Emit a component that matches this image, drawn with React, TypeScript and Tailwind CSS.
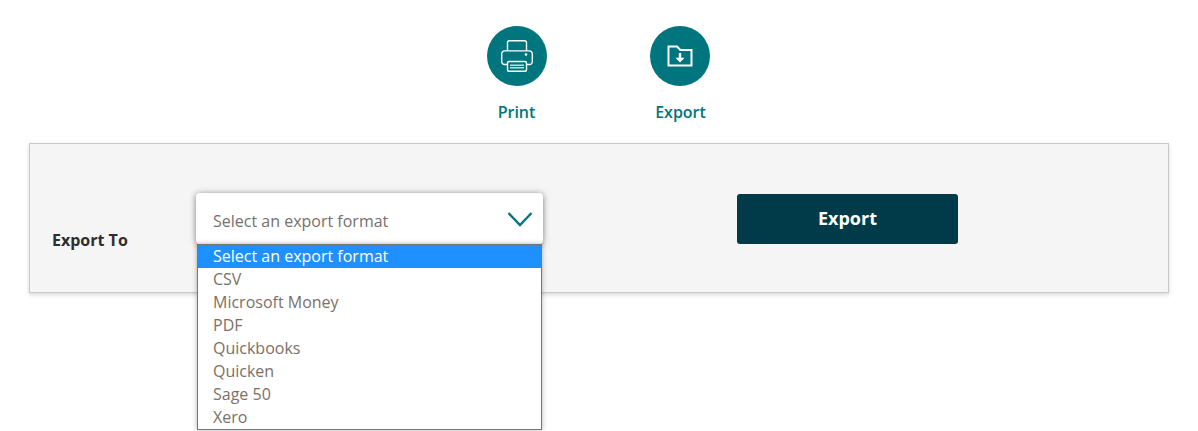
const formats = ["CSV", "Microsoft Money", "PDF", "Quickbooks", "Quicken", "Sage 50", "Xero"];

function PrinterIcon() {
  return (
    <svg width="32" height="32" viewBox="0 0 32 32" fill="none" stroke="#fff" strokeWidth="1.4">
      <path d="M6.500 11V2.500a1.800 1.800 0 0 1 1.800-1.800h15.400a1.800 1.800 0 0 1 1.800 1.800V11" />
      <path d="M6.500 24.500H3.500a2.800 2.800 0 0 1-2.800-2.800v-8a2.800 2.800 0 0 1 2.800-2.800h25a2.800 2.800 0 0 1 2.800 2.800v8a2.800 2.800 0 0 1-2.800 2.800h-3" />
      <rect x="6.500" y="21.500" width="19" height="9.800" rx="1.500" />
      <rect x="9" y="24.500" width="14" height="4" fill="#bfe0e2" stroke="none" />
      <path d="M9 26.500h14" strokeWidth="1" stroke="#00757d" />
      <circle cx="25" cy="14.500" r="1.300" fill="#fff" stroke="none" />
    </svg>
  );
}

function FolderIcon() {
  return (
    <svg width="26" height="22" viewBox="0 0 26 22" fill="none">
      <path d="M1.500 1.500h8.500l3.300 3.500h11.200v15.500H1.500z" stroke="#fff" strokeWidth="2" />
      <path d="M11.800 8h2.400v4.800h3.300L13 17.500l-4.500-4.700h3.300z" fill="#fff" />
    </svg>
  );
}

export default function App() {
  return (
    <div className="h-[431px] overflow-hidden bg-white font-['Open_Sans',sans-serif]">
      <div className="flex justify-center pt-[26px] pr-[2px]">
        <div className="flex w-[163px] flex-col items-center">
          <div className="flex h-[60px] w-[60px] items-center justify-center rounded-full bg-[#00757d]">
            <PrinterIcon />
          </div>
          <span className="mt-[15px] text-base leading-[22px] font-semibold text-[#00757d]">Print</span>
        </div>
        <div className="flex w-[163px] flex-col items-center">
          <div className="flex h-[60px] w-[60px] items-center justify-center rounded-full bg-[#00757d]">
            <FolderIcon />
          </div>
          <span className="mt-[15px] ml-[2px] text-base leading-[22px] font-semibold text-[#00757d]">Export</span>
        </div>
      </div>

      <div className="mx-[29px] mt-[20px] flex h-[150px] border border-[#c8c8c8] bg-[#f5f5f5] pt-[49px] pl-[22px] shadow-[0_2px_4px_rgba(0,0,0,0.15)]">
        <span className="mt-[36px] w-[144px] text-base leading-[22px] font-bold text-[#2e2e2e]">Export To</span>
        <div className="relative h-[51px] w-[347px]">
          <div className="flex h-full items-center justify-between rounded-[4px] bg-white pt-[5px] pr-[10px] pl-[17px] shadow-[0_1px_6px_rgba(0,0,0,0.5)]">
            <span className="text-base text-[#76706c]">Select an export format</span>
            <svg width="26" height="16" viewBox="0 0 26 16" fill="none" className="mb-[5px]">
              <path d="M1.500 2 13 14 24.500 2" stroke="#00757d" strokeWidth="2.400" />
            </svg>
          </div>
          <ul className="absolute top-[51px] left-px z-10 w-[345px] border border-[#767676] bg-white text-base leading-[23px] text-[#7b7068] shadow-[0_0_5px_rgba(0,0,0,0.3)]">
            <li className="bg-[#1e90ff] pl-[15px] text-white">Select an export format</li>
            {formats.map((name) => (
              <li key={name} className="pl-[15px]">{name}</li>
            ))}
          </ul>
        </div>
        <button className="mt-[1px] ml-[194px] h-[50px] w-[221px] rounded-[3px] bg-[#013b4a] pb-[2px] text-lg font-bold text-white">
          Export
        </button>
      </div>
    </div>
  );
}
